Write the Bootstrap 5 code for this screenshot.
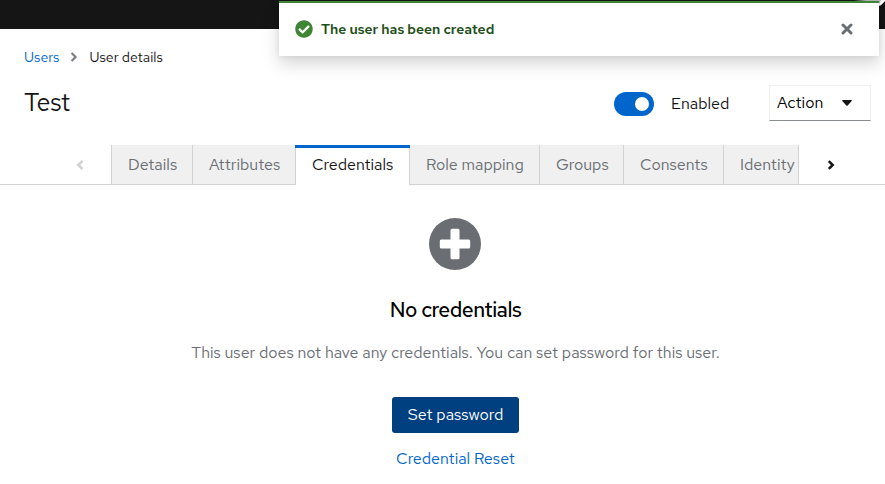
<!DOCTYPE html>
<html lang="en">
<head>
<meta charset="utf-8">
<meta name="viewport" content="width=device-width, initial-scale=1">
<title>User details</title>
<link href="https://cdn.jsdelivr.net/npm/bootstrap@5.3.0/dist/css/bootstrap.min.css" rel="stylesheet">
<style>
body{font-family:"Red Hat Text",Inter,"Noto Sans",sans-serif;font-size:16px;line-height:24px;color:#151515;height:484px;overflow:hidden}
a{color:#06c;text-decoration:none}
svg{display:block;flex:none}
.masthead{height:29px;background:#151515}
.user-alert{position:absolute;left:279px;top:1px;width:600px;height:55px;border-top:2px solid #3e8635;box-shadow:0 8px 16px rgba(3,3,3,.16),0 0 6px rgba(3,3,3,.08);padding:0 26px 2px 16px;z-index:5}
.alert-title{font-size:14px;font-weight:560;letter-spacing:-.02px;color:#1e4f18;margin-left:8px}
.crumbs{font-size:14px;line-height:20px;padding:18px 24px 0}
.title-bar{height:36px;margin:18px 14px 0 24px}
.page-title{font-size:25px;line-height:31px;font-weight:440;letter-spacing:-.4px;margin:0 0 1px}
.switch{width:40px;height:24px;border-radius:12px;background:#06c;padding:5px;margin-top:2px}
.switch span{width:14px;height:14px;border-radius:50%;background:#fff}
.enabled-label{width:115px;padding-left:17px;margin-top:1px}
.action{width:102px;height:36px;border:1px solid #f0f0f0;border-bottom-color:#8a8d90;padding:0 18px 0 7px;border-radius:0;background:#fff}
.tabs{height:40px;margin-top:24px;border-bottom:1px solid #d2d2d2}
.scroller{width:111px;padding-left:76px}
.scroller-next{padding-left:28px}
.tab-strip{width:688px;height:40px;border-right:1px solid #d2d2d2}
.tab{flex:none;height:40px;border-left:1px solid #d2d2d2;border-bottom:1px solid #d2d2d2;background:#f0f0f0;color:#6a6e73;padding:8px 0 0 16px;white-space:nowrap}
.tab.current{position:relative;background:#fff;color:#151515;border-bottom:0}
.tab.current::before{content:"";position:absolute;top:0;left:-1px;right:-1px;height:3px;background:#06c}
.w-details{width:81px}.w-attributes{width:103px}.w-credentials{width:114px}.w-roles{width:130px}.w-groups{width:84px}.w-consents{width:100px}.w-identity{width:175px}
.empty{padding:33px 0 0 26px}
.empty svg{margin-right:2px}
.empty h2{font-size:21px;line-height:26px;font-weight:480;letter-spacing:-.5px;color:#000;margin:27px 0 0}
.empty p{color:#6a6e73;margin:18px 0 0}
.set-password{width:127px;height:36px;margin-top:32px;background:#004080;color:#fff;border-radius:3px;padding:0;font-size:16px;border:0}
.reset{margin-top:14px}
</style>
</head>
<body>
<header class="masthead d-flex justify-content-end overflow-hidden">
  <svg width="31" height="6" viewBox="0 0 31 6"><path d="M0 0h31v1l-5 5h-3L12 1z" fill="#b8bbbe"/><path d="M27 0h4v1l-4 4h-2z" fill="#fff"/></svg>
</header>
<div class="user-alert bg-white d-flex align-items-center" role="alert">
  <svg width="18" height="18" viewBox="0 0 512 512"><path fill="#3e8635" d="M504 256c0 137-111 248-248 248S8 393 8 256 119 8 256 8s248 111 248 248zM227 387l184-184c6-6 6-16 0-22l-23-23c-6-6-16-6-22 0L216 308l-70-70c-6-6-16-6-22 0l-23 23c-6 6-6 16 0 22l104 104c6 6 16 6 22 0z"/></svg>
  <span class="alert-title">The user has been created</span>
  <svg class="ms-auto" width="12" height="12" viewBox="0 0 12 12"><path d="M2 2l8 8M10 2l-8 8" stroke="#6a6e73" stroke-width="3" stroke-linecap="round"/></svg>
</div>
<main>
  <nav class="crumbs d-flex align-items-center">
    <a href="#">Users</a>
    <svg class="ms-2 me-2" width="14" height="12" viewBox="0 0 14 12"><path d="M4.600 2L8.600 6l-4 4" fill="none" stroke="#7a7e83" stroke-width="2.200"/></svg>
    <span>User details</span>
  </nav>
  <div class="title-bar d-flex align-items-center">
    <h1 class="page-title">Test</h1>
    <div class="switch ms-auto d-flex justify-content-end"><span></span></div>
    <span class="enabled-label">Enabled</span>
    <button class="action d-flex align-items-center justify-content-between">Action
      <svg width="10" height="6" viewBox="0 0 10 6"><path d="M.8 0h8.400c.8 0 .9.7.5 1.100L5.700 5.400q-.7.7-1.400 0L.3 1.100Q-.2.3.8 0z" fill="#151515"/></svg>
    </button>
  </div>
  <div class="tabs d-flex">
    <div class="scroller d-flex align-items-center"><svg width="8" height="12" viewBox="0 0 8 12"><path d="M6.400 2L2.300 6l4.100 4" fill="none" stroke="#d2d2d2" stroke-width="2.500"/></svg></div>
    <div class="tab-strip d-flex overflow-hidden">
      <div class="tab w-details">Details</div><div class="tab w-attributes">Attributes</div><div class="tab current w-credentials">Credentials</div><div class="tab w-roles">Role mapping</div><div class="tab w-groups">Groups</div><div class="tab w-consents">Consents</div><div class="tab w-identity">Identity</div>
    </div>
    <div class="scroller-next d-flex align-items-center"><svg width="8" height="12" viewBox="0 0 8 12"><path d="M1.800 2.200L5.700 6 1.800 9.800" fill="none" stroke="#151515" stroke-width="2.500"/></svg></div>
  </div>
  <section class="empty d-flex flex-column align-items-center">
    <svg width="52" height="52" viewBox="0 0 52 52"><circle cx="26" cy="26" r="26" fill="#6a6e73"/><path d="M23 10.800h6q1.500 0 1.500 1.500v9.200h9.200q1.500 0 1.500 1.500v6q0 1.500-1.500 1.500h-9.200v9.200q0 1.500-1.500 1.500h-6q-1.500 0-1.500-1.500v-9.200h-9.200q-1.500 0-1.500-1.500v-6q0-1.500 1.500-1.500h9.200v-9.200q0-1.500 1.500-1.500z" fill="#fff"/></svg>
    <h2>No credentials</h2>
    <p>This user does not have any credentials. You can set password for this user.</p>
    <button class="btn set-password">Set password</button>
    <a class="reset" href="#">Credential Reset</a>
  </section>
</main>
<script src="https://cdn.jsdelivr.net/npm/bootstrap@5.3.0/dist/js/bootstrap.bundle.min.js"></script>
</body>
</html>
